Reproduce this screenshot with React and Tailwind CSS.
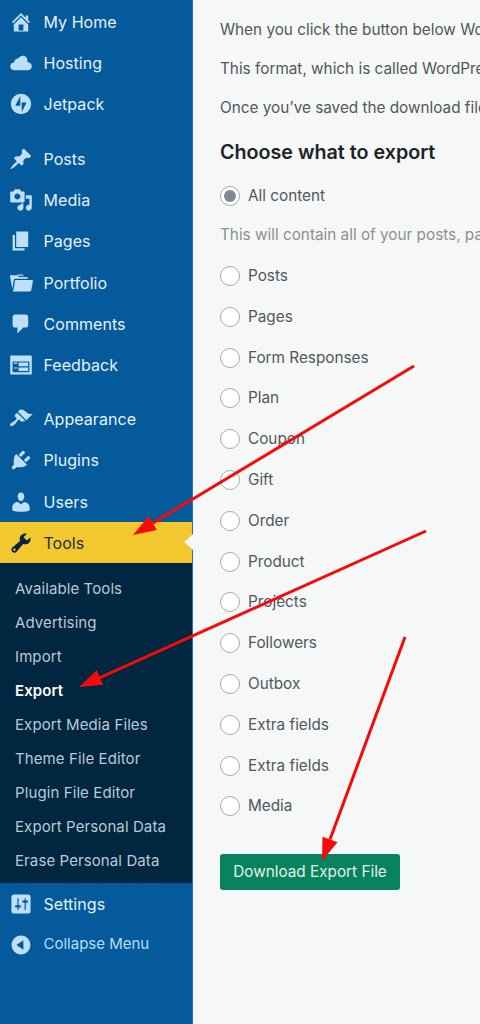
import React from 'react';

const ICONS = {
  home: 'M16 8.5l1.53 1.53-1.06 1.06L10 4.62l-6.47 6.47-1.06-1.06L10 2.5l4 4v-2h2v4zm-6-2.46l6 5.99V18H4v-5.97zM12 17v-5H8v5h4z',
  cloud: 'M15.4 9.2c1.9.2 3.6 1.5 3.6 3.5 0 2-1.7 3.3-3.6 3.3H4.6C2.7 16 1 14.700 1 12.700c0-1.900 1.500-3.200 3.300-3.400C4.700 7 6.300 6 7.800 6.300 8.700 4.900 10.100 4 11.700 4c2.300 0 4 1.900 3.700 5.200z',
  jetpack: 'M10 1.500a8.500 8.500 0 1 0 0 17 8.500 8.500 0 0 0 0-17zM9.400 11.400H5.300l4.100-8zm1.200 5.200V8.800h4.100z',
  posts: 'M10.44 3.02l1.82-1.82 6.36 6.35-1.83 1.82c-1.05-.68-2.48-.57-3.41.36l-.75.75c-.92.93-1.04 2.35-.35 3.41l-1.83 1.82-2.41-2.41-2.8 2.79c-.42.42-3.38 2.71-3.8 2.29s1.86-3.39 2.28-3.81l2.79-2.79L4.1 9.36l1.83-1.82c1.05.69 2.48.57 3.4-.36l.75-.75c.93-.92 1.05-2.35.36-3.41z',
  media: 'M13 11V4c0-.55-.45-1-1-1h-1.67L9 1H5L3.67 3H2c-.55 0-1 .45-1 1v7c0 .55.45 1 1 1h10c.55 0 1-.45 1-1zM7 4.5c1.38 0 2.5 1.12 2.5 2.5S8.38 9.5 7 9.5 4.5 8.38 4.5 7 5.62 4.5 7 4.5zM14 6h5v10.5c0 1.38-1.12 2.5-2.5 2.5S14 17.88 14 16.5s1.12-2.5 2.5-2.5c.17 0 .34.02.5.05V9h-3V6zm-4 8.05V13h2v3.5c0 1.38-1.12 2.5-2.5 2.5S7 17.88 7 16.5 8.12 14 9.5 14c.17 0 .34.02.5.05z',
  pages: 'M6 15V2h10v13H6zm-1 1h8v2H3V5h2v11z',
  portfolio: 'M1 3.500h6.300l1 1.500h7.200v1.500H5.200c-.6 0-1.100.4-1.200 1L2.700 15 .9 4.500c-.1-.6.2-1 .1-1zM5.600 7.500H19.200c.5 0 .9.400.8.900l-1.500 7.700c-.1.500-.5.900-1 .9H2.900c.5-.3.8-.8.9-1.300l1.100-7.500c.1-.4.400-.7.700-.7zM7 3h4.500l1 1H8z',
  comments: 'M5 2h9c1.1 0 2 .9 2 2v7c0 1.100-.9 2-2 2h-2l-5 5v-5H5c-1.100 0-2-.9-2-2V4c0-1.100.9-2 2-2z',
  feedback: 'M2 2h16c.55 0 1 .45 1 1v14c0 .55-.45 1-1 1H2c-.55 0-1-.45-1-1V3c0-.55.45-1 1-1zm15 14V7H3v9h14zM4 8v1h3V8H4zm4 0v3h8V8H8zm-4 4v1h3v-1H4zm4 0v3h8v-3H8z',
  appearance: 'M14.48 11.06L7.41 3.99l1.5-1.5c.5-.56 2.3-.47 3.51.32 1.21.8 1.43 1.28 2.91 2.1 1.18.64 2.45 1.26 4.45.85zm-.71.71L6.7 4.7 4.93 6.470c-.39.39-.39 1.020 0 1.410l1.060 1.060c.39.39.39 1.030 0 1.420-.6.6-1.430 1.110-2.210 1.690-.35.26-.7.53-1.010.84C1.430 13.230.4 14.960 1.160 15.720s2.530-.2 3.850-1.530c.31-.31.58-.66.85-1.020.56-.79 1.090-1.620 1.680-2.210.39-.39 1.020-.39 1.410 0l1.060 1.060c.39.39 1.020.39 1.410 0z',
  plugins: 'M13.11 4.36L9.87 7.6 8 5.73l3.24-3.24c.35-.34 1.05-.2 1.56.32.52.51.66 1.21.31 1.55zm-8 1.77l.91-1.12 9.01 9.01-1.19.84c-.71.71-2.63 1.16-3.82 1.16H6.14L4.9 17.26c-.59.59-1.54.59-2.12 0-.59-.58-.59-1.53 0-2.12l1.24-1.24v-3.88c0-1.13.4-3.19 1.09-3.89zm7.26 3.97l3.24-3.24c.34-.35 1.04-.21 1.55.31.52.51.66 1.21.31 1.55l-3.24 3.25z',
  users: 'M10 9.25c-2.27 0-2.73-3.44-2.73-3.44C7 4.02 7.82 2 9.97 2c2.16 0 2.98 2.02 2.71 3.81 0 0-.41 3.44-2.68 3.44zm0 2.57L12.72 10c2.39 0 4.52 2.33 4.52 4.53v2.49s-3.65 1.13-7.24 1.13c-3.65 0-7.24-1.13-7.24-1.13v-2.49c0-2.25 1.94-4.48 4.47-4.48z',
  tools: 'M16.68 9.77c-1.34 1.34-3.3 1.67-4.95.99l-5.41 6.52c-.99.99-2.59.99-3.58 0s-.99-2.59 0-3.57l6.52-5.42c-.68-1.65-.35-3.61.99-4.95 1.28-1.28 3.12-1.62 4.72-1.06l-2.89 2.89 2.82 2.82 2.86-2.87c.53 1.58.18 3.39-1.08 4.65zM3.81 16.21c.4.39 1.04.39 1.43 0 .4-.4.4-1.04 0-1.43-.39-.4-1.03-.4-1.43 0-.39.39-.39 1.03 0 1.43z',
  settings: 'M18 16V4c0-1.1-.9-2-2-2H4c-1.1 0-2 .9-2 2v12c0 1.1.9 2 2 2h12c1.1 0 2-.9 2-2zM8 11h1c.55 0 1 .45 1 1s-.45 1-1 1H8v1.5c0 .28-.22.5-.5.5s-.5-.22-.5-.5V13H6c-.55 0-1-.45-1-1s.45-1 1-1h1V5.5c0-.28.22-.5.5-.5s.5.22.5.5V11zm5-2h-1c-.55 0-1-.45-1-1s.45-1 1-1h1V5.5c0-.28.22-.5.5-.5s.5.22.5.5V7h1c.55 0 1 .45 1 1s-.45 1-1 1h-1v5.5c0 .28-.22.5-.5.5s-.5-.22-.5-.5V9z',
  collapse: 'M10 2.16c4.33 0 7.84 3.51 7.84 7.84s-3.51 7.84-7.84 7.84S2.16 14.33 2.16 10 5.71 2.16 10 2.16zm2 11.72V6.12L6.18 9.97z',
};

const GROUP_1 = [['home', 'My Home'], ['cloud', 'Hosting'], ['jetpack', 'Jetpack']];
const GROUP_2 = [['posts', 'Posts'], ['media', 'Media'], ['pages', 'Pages'], ['portfolio', 'Portfolio'], ['comments', 'Comments'], ['feedback', 'Feedback']];
const GROUP_3 = [['appearance', 'Appearance'], ['plugins', 'Plugins'], ['users', 'Users']];

const SUBMENU = ['Available Tools', 'Advertising', 'Import', 'Export', 'Export Media Files', 'Theme File Editor', 'Plugin File Editor', 'Export Personal Data', 'Erase Personal Data'];

const OPTIONS = ['Posts', 'Pages', 'Form Responses', 'Plan', 'Coupon', 'Gift', 'Order', 'Product', 'Projects', 'Followers', 'Outbox', 'Extra fields', 'Extra fields', 'Media'];

function Icon({ name, className }) {
  return (
    <svg viewBox="0 0 20 20" className={`h-6 w-6 shrink-0 fill-current ${className}`}>
      <path fillRule="evenodd" d={ICONS[name]} />
    </svg>
  );
}

function MenuItem({ icon, label }) {
  return (
    <div className="flex h-[41.2px] items-center pl-[9px] text-[#e6f1fa]">
      <Icon name={icon} className="text-[#bddffa]" />
      <span className="ml-[10.5px] text-[16px] tracking-[0.05px]">{label}</span>
    </div>
  );
}

function Radio({ label, checked }) {
  return (
    <label className="flex h-[40.8px] items-center gap-[8px] text-[15.3px] text-[#50575e]">
      <span className="flex h-5 w-5 items-center justify-center rounded-full border-[1.5px] border-[#a7aaad] bg-white">
        {checked && <span className="h-3 w-3 rounded-full bg-[#7e8993]" />}
      </span>
      <span className="pt-[1px]">{label}</span>
    </label>
  );
}

function Arrow({ x1, y1, x2, y2 }) {
  // head drawn as a triangle at the end of the line
  const a = Math.atan2(y2 - y1, x2 - x1);
  const len = 23;
  const w = 8;
  const bx = x2 - len * Math.cos(a);
  const by = y2 - len * Math.sin(a);
  const px = -Math.sin(a) * w;
  const py = Math.cos(a) * w;
  return (
    <g>
      <line x1={x1} y1={y1} x2={bx} y2={by} stroke="#f50a0a" strokeWidth="3" />
      <polygon points={`${x2},${y2} ${bx + px},${by + py} ${bx - px},${by - py}`} fill="#f50a0a" />
    </g>
  );
}

export default function App() {
  return (
    <div className="relative flex h-[1024px] w-[480px] overflow-hidden bg-[#f6f7f7] font-['Inter',sans-serif]">
      <aside className="w-[193px] shrink-0 border-r border-[#2f74ae] bg-[#045a9b] pt-[1.5px]">
        {GROUP_1.map(([i, l]) => <MenuItem key={l} icon={i} label={l} />)}
        <div className="h-[13.4px]" />
        {GROUP_2.map(([i, l]) => <MenuItem key={l} icon={i} label={l} />)}
        <div className="h-[13px]" />
        {GROUP_3.map(([i, l]) => <MenuItem key={l} icon={i} label={l} />)}
        <div className="relative flex h-[41.2px] items-center bg-[#f2c82e] pl-[9px] text-[#1d2f40]">
          <Icon name="tools" className="text-[#04243c]" />
          <span className="ml-[10.5px] text-[16px]">Tools</span>
          <span className="absolute right-[-1px] top-[12px] h-0 w-0 border-y-[8px] border-r-[9px] border-y-transparent border-r-[#f6f7f7]" />
        </div>
        <div className="bg-[#01263f] pb-[5.5px] pt-[8.5px]">
          {SUBMENU.map((s) => (
            <div key={s} className={`flex h-[34px] items-center pl-[15px] text-[15px] tracking-[0.1px] ${s === 'Export' ? 'font-semibold text-white' : 'text-[#b9cad7]'}`}>
              {s}
            </div>
          ))}
        </div>
        <MenuItem icon="settings" label="Settings" />
        <div className="flex h-[40px] items-center pl-[9px] text-[#b9dcf7]">
          <Icon name="collapse" className="text-[#bddffa]" />
          <span className="ml-[10.5px] text-[15px]">Collapse Menu</span>
        </div>
      </aside>

      <main className="min-w-0 flex-1 overflow-hidden pl-[27px]">
        <div className="w-[640px]">
          <p className="mt-[20px] text-[15.3px] leading-[20px] text-[#50575e]">When you click the button below WordPress will create an XML file for you to save.</p>
          <p className="mt-[19px] text-[15.3px] leading-[20px] text-[#50575e]">This format, which is called WordPress eXtended RSS, will contain your content.</p>
          <p className="mt-[19px] text-[15.3px] leading-[20px] text-[#50575e]">Once you’ve saved the download file, you can use the Import function.</p>
          <h2 className="mt-[20px] text-[19.7px] font-semibold leading-[28px] text-[#1d2327]">Choose what to export</h2>
          <div className="mt-[9.6px]"><Radio label="All content" checked /></div>
          <p className="h-[39.2px] pt-[9px] text-[15.3px] leading-[20px] text-[#8c8f94]">This will contain all of your posts, pages, comments, custom fields and more.</p>
          {OPTIONS.map((o, i) => <Radio key={i} label={o} />)}
          <button className="mt-[27.2px] h-[36px] w-[180px] rounded-[3px] bg-[#08835d] pt-[1px] text-center text-[15.3px] text-[#e2f1eb]">Download Export File</button>
        </div>
      </main>

      {/* red annotation arrows over the screenshot */}
      <svg className="pointer-events-none absolute inset-0" width="480" height="1024">
        <Arrow x1={414} y1={366} x2={133} y2={535} />
        <Arrow x1={426} y1={531} x2={79} y2={687} />
        <Arrow x1={405} y1={637} x2={322} y2={861} />
      </svg>
    </div>
  );
}
